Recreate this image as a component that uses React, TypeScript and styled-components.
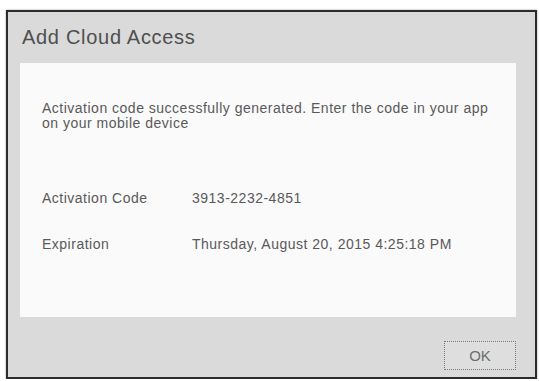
import React from "react";
import styled, { createGlobalStyle } from "styled-components";

const GlobalStyle = createGlobalStyle`
  html, body {
    margin: 0;
    padding: 0;
    background: #ffffff;
  }
  body {
    font-family: "Liberation Sans", Arial, sans-serif;
  }
`;

const Dialog = styled.div`
  box-sizing: border-box;
  margin: 10px 0 0 6px;
  width: 531px;
  height: 369px;
  border: 2px solid #2b2b2b;
  background: #dadada;
  box-shadow: 0 0 2px rgba(0, 0, 0, 0.35);
  display: flex;
  flex-direction: column;
`;

const Header = styled.div`
  box-sizing: border-box;
  height: 51px;
  padding: 15px 0 0 14px;
`;

const Title = styled.h1`
  margin: 0;
  font-size: 20px;
  line-height: 20px;
  font-weight: normal;
  letter-spacing: 0.7px;
  color: #4f4f4f;
`;

const Panel = styled.div`
  box-sizing: border-box;
  margin: 0 19px 0 12px;
  height: 254px;
  background: #fafafa;
  padding: 38px 22px 0 22px;
  color: #595959;
  font-size: 14px;
  letter-spacing: 0.5px;
`;

const Message = styled.p`
  margin: 0;
  line-height: 15px;
  width: 460px;
`;

const Details = styled.div`
  margin-top: 60px;
  display: grid;
  grid-template-columns: 150px 1fr;
  row-gap: 31px;
  line-height: 15px;
`;

const Label = styled.div``;
const Value = styled.div``;

const Footer = styled.div`
  display: flex;
  justify-content: flex-end;
  padding: 24px 19px 0 0;
`;

const Button = styled.button`
  box-sizing: border-box;
  width: 72px;
  height: 29px;
  border: 1px dotted #7a7a7a;
  background: #dedede;
  color: #6e6e6e;
  font-family: "Liberation Sans", Arial, sans-serif;
  font-size: 15px;
  padding: 0;
  cursor: pointer;
`;

export default function App() {
  return (
    <>
      <GlobalStyle />
      <Dialog>
        <Header>
          <Title>Add Cloud Access</Title>
        </Header>
        <Panel>
          <Message>
            Activation code successfully generated. Enter the code in your app
            on your mobile device
          </Message>
          <Details>
            <Label>Activation Code</Label>
            <Value>3913-2232-4851</Value>
            <Label>Expiration</Label>
            <Value>Thursday, August 20, 2015 4:25:18 PM</Value>
          </Details>
        </Panel>
        <Footer>
          <Button>OK</Button>
        </Footer>
      </Dialog>
    </>
  );
}
